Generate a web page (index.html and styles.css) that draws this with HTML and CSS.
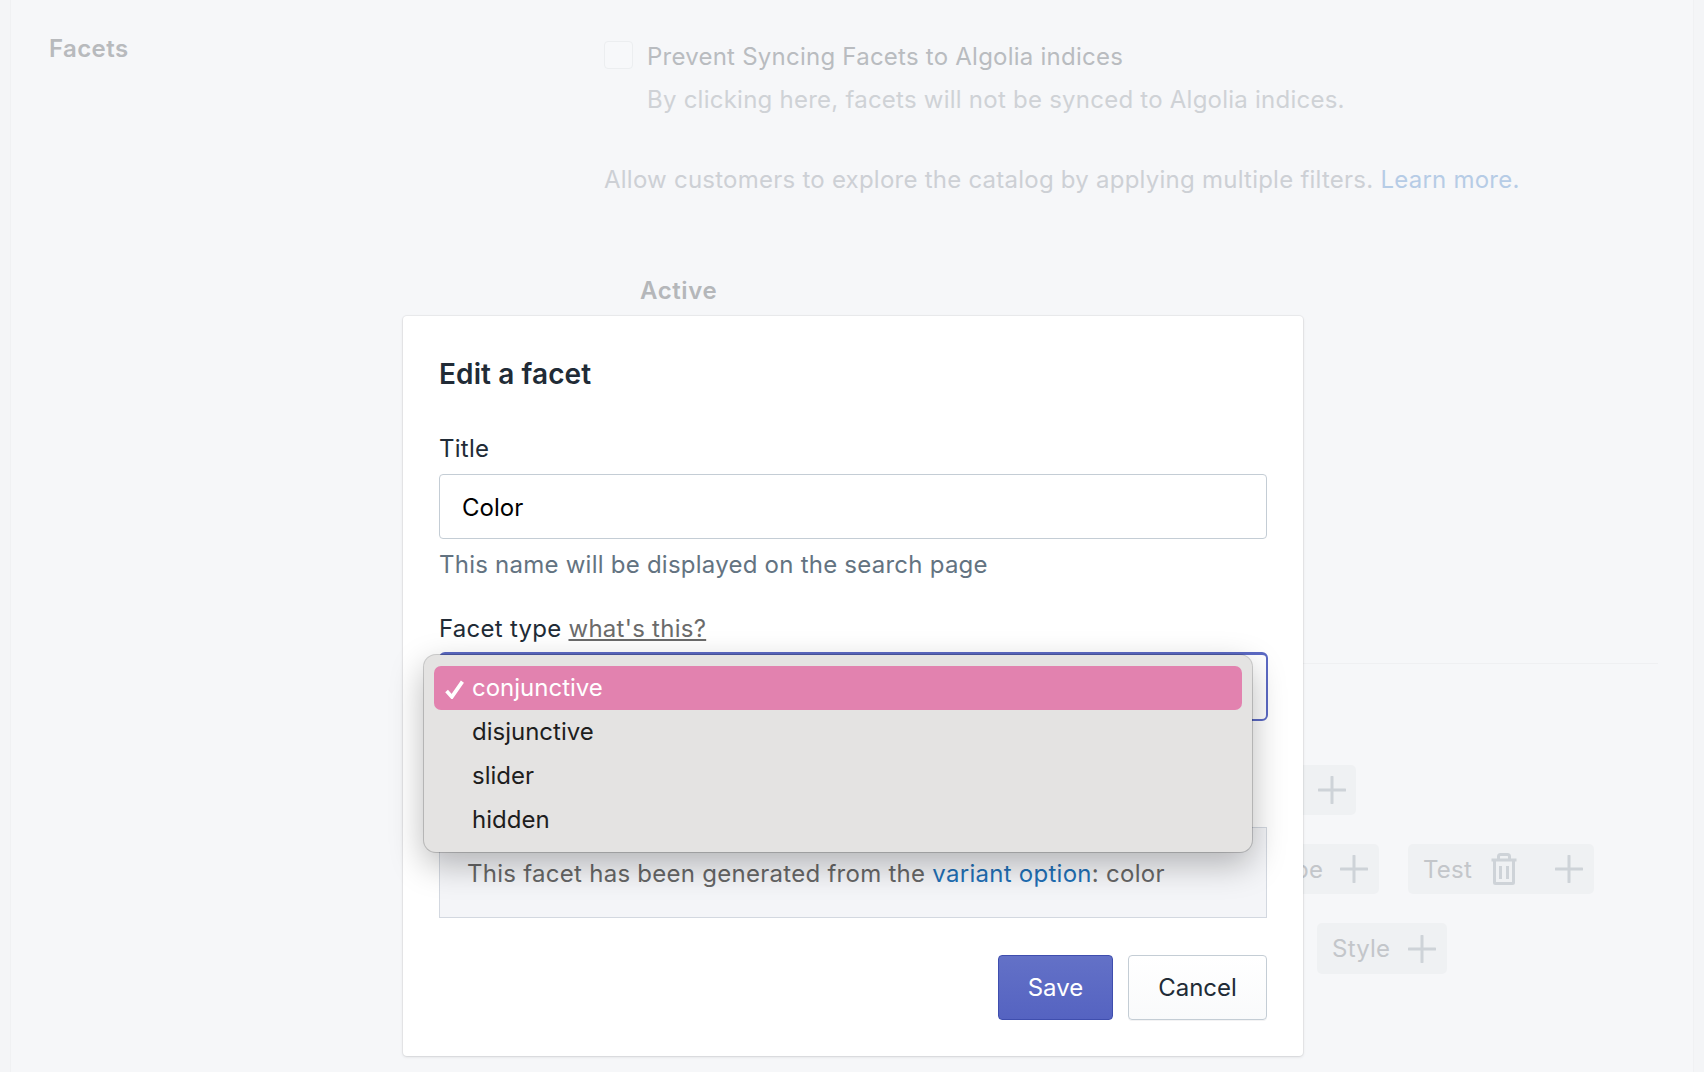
FILE: index.html
```html
<!DOCTYPE html>
<html lang="en">
<head>
<meta charset="utf-8">
<title>Edit a facet</title>
<link rel="stylesheet" href="styles.css">
</head>
<body>
<main class="panel">
  <section class="section">
    <h2 class="section-title">Facets</h2>
    <div class="section-body">
      <div class="check-row">
        <span class="checkbox"></span>
        <div class="check-text">
          <div class="check-label">Prevent Syncing Facets to Algolia indices</div>
          <div class="check-help">By clicking here, facets will not be synced to Algolia indices.</div>
        </div>
      </div>
      <p class="intro">Allow customers to explore the catalog by applying multiple filters. <a class="learn">Learn more.</a></p>
      <h3 class="active-title">Active</h3>
    </div>
  </section>
  <hr class="divider">
  <div class="tags">
    <div class="tag-row row-one">
      <div class="tag tag-first"><svg class="plus" viewBox="0 0 28 28"><path d="M14 1v26M1 14h26"/></svg></div>
    </div>
    <div class="tag-row row-two">
      <div class="tag tag-type"><span>Type</span><svg class="plus" viewBox="0 0 28 28"><path d="M14 1v26M1 14h26"/></svg></div>
      <div class="tag tag-test"><span>Test</span>
        <svg class="trash" viewBox="0 0 26 32"><path d="M0.500 7h25M7.500 7V3.500Q7.500 1.500 9.500 1.500h7Q18.500 1.500 18.500 3.500V7M3.500 7v22.500q0 1 1 1h17q1 0 1-1V7M9.500 13v13M16.500 13v13"/></svg>
        <svg class="plus plus-test" viewBox="0 0 28 28"><path d="M14 1v26M1 14h26"/></svg>
      </div>
    </div>
    <div class="tag-row row-three">
      <div class="tag tag-style"><span>Style</span><svg class="plus" viewBox="0 0 28 28"><path d="M14 1v26M1 14h26"/></svg></div>
    </div>
  </div>
</main>

<div class="modal">
  <h1 class="modal-title">Edit a facet</h1>
  <label class="field-label">Title</label>
  <div class="input">Color</div>
  <p class="help">This name will be displayed on the search page</p>
  <div class="field-label type-label">Facet type <a class="whats">what's this?</a></div>
  <div class="select-wrap">
    <div class="select"></div>
    <ul class="popup">
      <li class="option selected">
        <svg class="tick" viewBox="0 0 18 18"><path d="M1.500 10.500 6.500 16 16.500 1.500"/></svg>conjunctive
      </li>
      <li class="option">disjunctive</li>
      <li class="option">slider</li>
      <li class="option">hidden</li>
    </ul>
  </div>
  <div class="info">This facet has been generated from the <a class="variant">variant option</a>: color</div>
  <div class="actions">
    <button class="btn btn-primary">Save</button>
    <button class="btn btn-default">Cancel</button>
  </div>
</div>
</body>
</html>
```

FILE: styles.css
```css
* { box-sizing: border-box; }
html, body { margin: 0; padding: 0; height: 100%; }
body {
  width: 1704px;
  height: 1072px;
  overflow: hidden;
  position: relative;
  background: #f4f5f7;
  font-family: Inter, "Liberation Sans", sans-serif;
  font-size: 24px;
  letter-spacing: .24px;
}
.panel {
  margin: 0 10px;
  height: 1072px;
  background: #f6f7f9;
  border-left: 1px solid #f0f1f3;
  border-right: 1px solid #f0f1f3;
}
.section { display: flex; padding-top: 35px; }
.section-title {
  margin: 0;
  width: 593px;
  padding-left: 38px;
  font-size: 24px;
  line-height: 28px;
  font-weight: 600;
  letter-spacing: .4px;
  color: #b8babd;
}
.section-body { flex: 1; }
.check-row { display: flex; gap: 14px; padding-top: 6px; }
.checkbox {
  width: 29px;
  height: 28px;
  border: 1px solid #eceef0;
  border-radius: 4px;
  background: #f7f8fa;
}
.check-text { padding-top: 1px; }
.check-label { line-height: 30px; color: #b9bcc0; }
.check-help { margin-top: 13px; line-height: 30px; color: #cfd2d6; }
.intro { margin: 50px 0 0; line-height: 30px; color: #cdd0d5; }
.learn { color: #b6cce6; }
.active-title {
  margin: 81px 0 0 36px;
  font-size: 24px;
  line-height: 30px;
  font-weight: 600;
  letter-spacing: .6px;
  color: #b5b7ba;
}
.divider {
  margin: 357px 35px 0 1281px;
  border: 0;
  border-top: 1px solid #eff0f2;
}
.tags { display: flex; flex-direction: column; gap: 29px; padding-top: 101px; }
.tag-row { display: flex; gap: 29px; }
.row-one { padding-left: 1218px; }
.row-two { padding-left: 1201px; }
.row-three { padding-left: 1306px; }
.tag {
  display: flex;
  align-items: center;
  height: 50px;
  border-radius: 5px;
  background: #eff1f3;
  color: #c3c6ca;
}
.plus { width: 28px; height: 28px; flex: none; fill: none; stroke: #ced3d8; stroke-width: 3; stroke-linecap: round; }
.tag-first { width: 127px; padding-left: 89px; }
.tag-type { width: 167px; padding-left: 54px; gap: 17px; }
.tag-test { width: 186px; padding-left: 15px; }
.trash { width: 26px; height: 32px; margin-left: 19px; fill: none; stroke: #ced3d8; stroke-width: 3; }
.plus-test { margin-left: 38px; }
.tag-style { width: 130px; padding-left: 15px; gap: 18px; height: 51px; }

.modal {
  position: absolute;
  left: 403px;
  top: 316px;
  width: 900px;
  height: 740px;
  padding: 35px 36px 0;
  background: #fff;
  border-radius: 4px;
  box-shadow: 0 0 0 1px rgba(63,63,68,.05), 0 1px 3px rgba(63,63,68,.15);
}
.modal-title {
  margin: 0;
  font-size: 28px;
  line-height: 46px;
  font-weight: 600;
  letter-spacing: .1px;
  color: #212b36;
}
.field-label { display: block; margin-top: 37px; line-height: 30px; color: #212b36; }
.input {
  margin-top: 10px;
  height: 65px;
  padding: 0 22px;
  line-height: 65px;
  border: 1px solid #c4cdd5;
  border-radius: 4px;
  color: #000;
  letter-spacing: 0;
}
.help { margin: 11px 0 0; line-height: 30px; color: #637381; }
.type-label { margin-top: 34px; letter-spacing: .26px; }
.whats { color: #6b6b6b; text-decoration: underline; }
.select-wrap { position: relative; margin-top: 8px; }
.select {
  height: 69px;
  margin-right: -1px;
  border: 2px solid #5c6ac4;
  border-top-width: 3px;
  border-radius: 6px;
  background: #fff;
}
.popup {
  position: absolute;
  left: -15px;
  top: 3px;
  width: 828px;
  height: 197px;
  margin: 0;
  padding: 11px 10px 0;
  list-style: none;
  background: #e4e3e2;
  border-radius: 12px;
  box-shadow: 0 0 0 1px rgba(0,0,0,.18), 0 12px 34px rgba(0,0,0,.28);
  letter-spacing: 0;
}
.option {
  position: relative;
  height: 44px;
  padding-left: 38px;
  line-height: 44px;
  color: #1e1e1e;
  border-radius: 7px;
}
.selected { background: #e282af; color: #fff; }
.tick {
  position: absolute;
  left: 11px;
  top: 14px;
  width: 19px;
  height: 19px;
  fill: none;
  stroke: #fff;
  stroke-width: 3.500;
}
.info {
  margin-top: 106px;
  height: 91px;
  padding: 31px 27px 0;
  line-height: 30px;
  letter-spacing: .27px;
  color: #666;
  background: #f4f5f8;
  border: 1px solid #d3d8e0;
}
.variant { color: #1f6fb5; }
.actions { display: flex; justify-content: flex-end; gap: 15px; margin-top: 37px; }
.btn {
  height: 65px;
  font-family: inherit;
  font-size: 24px;
  letter-spacing: 0;
  border-radius: 4px;
  padding: 0;
}
.btn-primary {
  width: 115px;
  color: #fff;
  border: 1px solid #3f4eae;
  background: linear-gradient(#6371c7, #5563c1);
}
.btn-default {
  width: 139px;
  color: #212b36;
  border: 1px solid #c4cdd5;
  background: linear-gradient(#fff, #f9fafb);
  box-shadow: 0 1px 0 rgba(22,29,37,.05);
}
```
